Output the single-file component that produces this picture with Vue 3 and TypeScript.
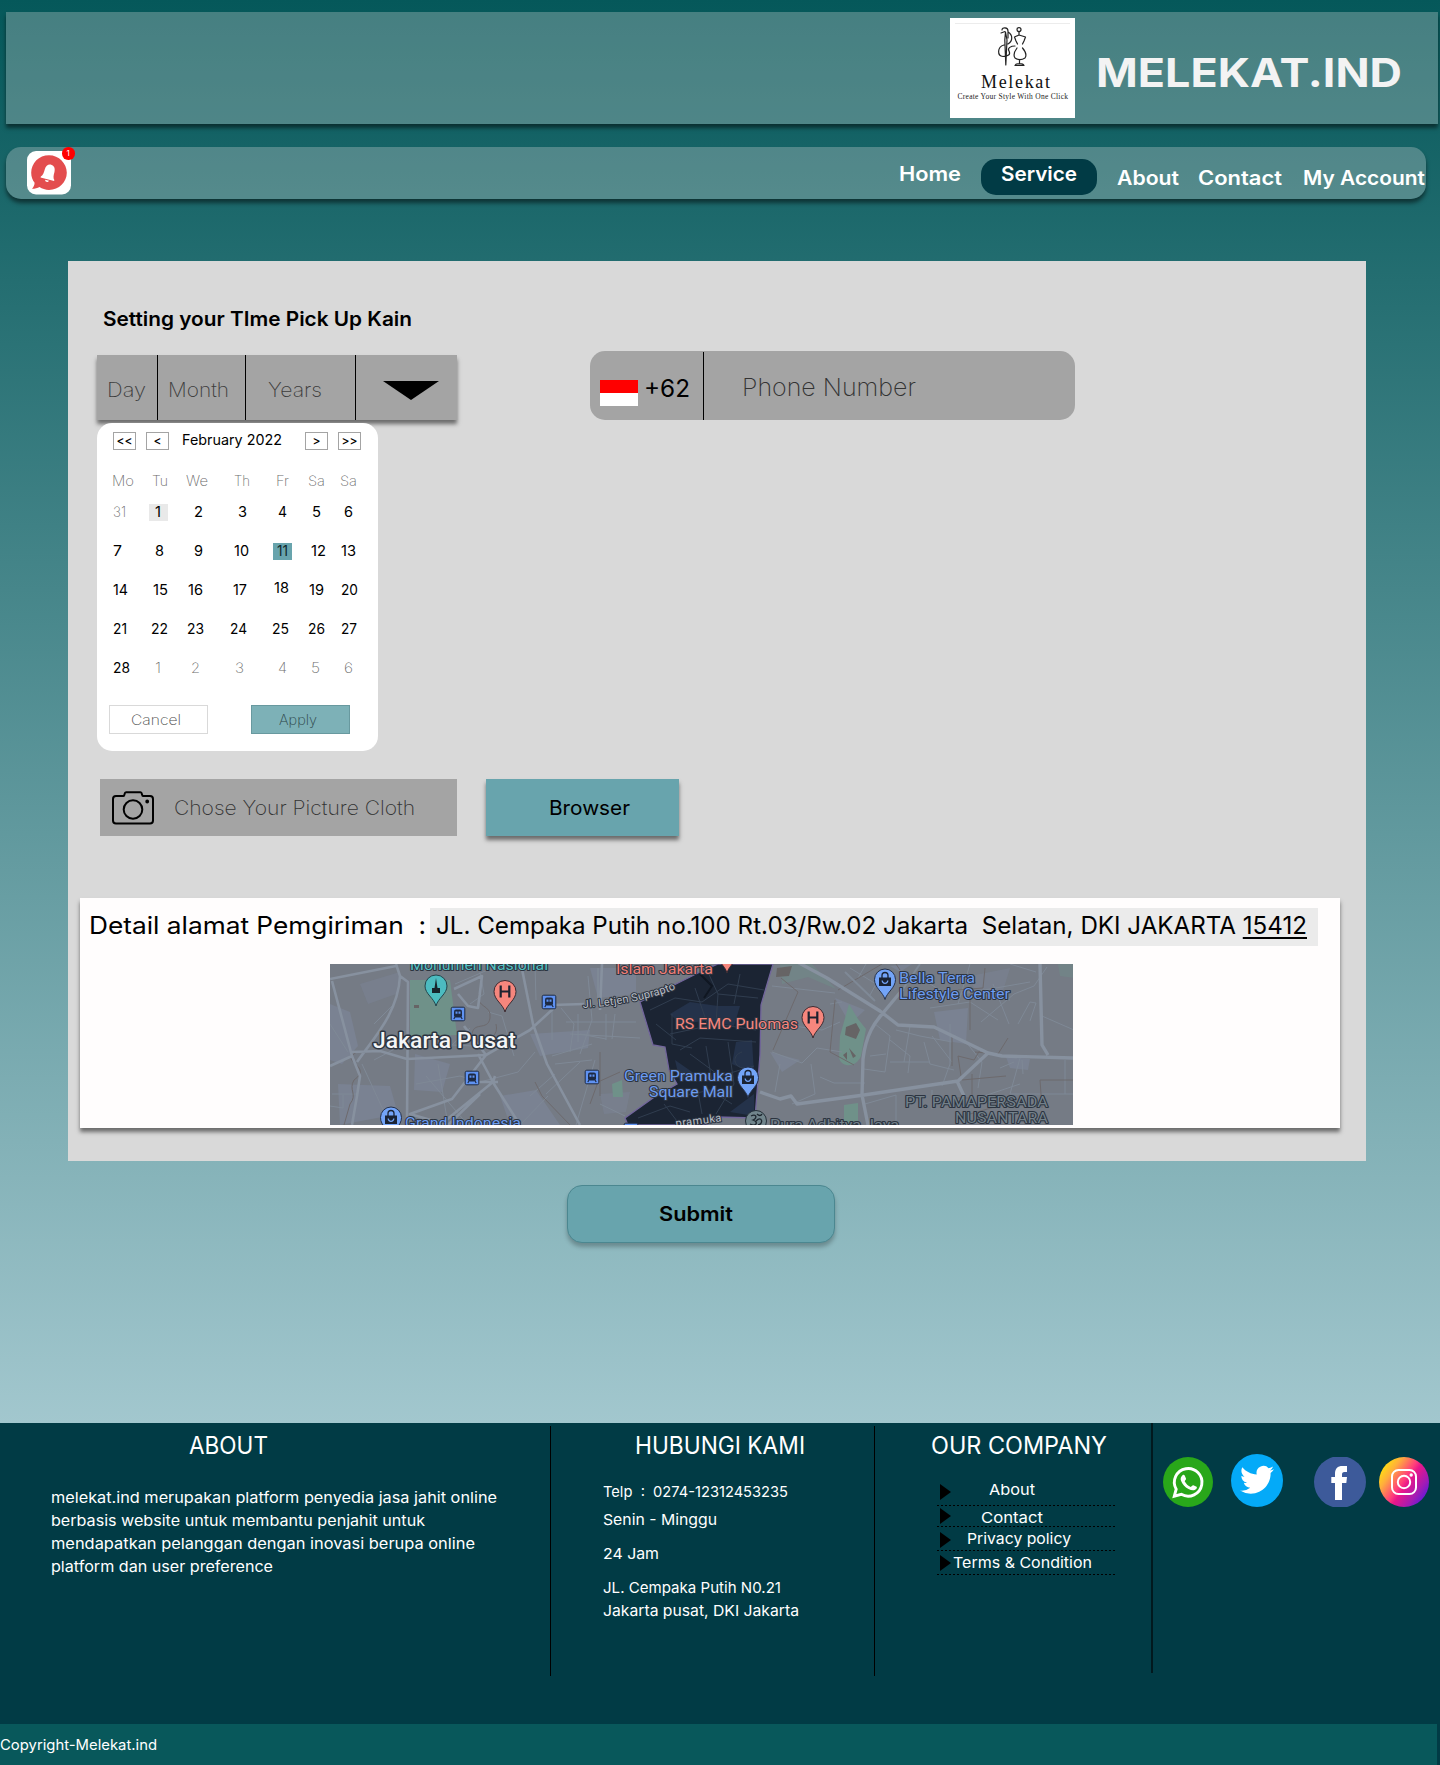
<script setup lang="ts">
import type { Directive } from 'vue'

// Stretches a label horizontally so that it fills the given width in pixels.
const vFit: Directive<HTMLElement, number> = {
  mounted(el, { value }) {
    const range = document.createRange()
    range.selectNodeContents(el)
    const natural = range.getBoundingClientRect().width
    el.style.display = 'inline-block'
    el.style.transformOrigin = '0 50%'
    el.style.transform = `scaleX(${value / natural})`
  },
}

interface NavItem { label: string; width: number; kind: string }
const nav: NavItem[] = [
  { label: 'Home', width: 62, kind: 'home' },
  { label: 'Service', width: 76, kind: 'active' },
  { label: 'About', width: 62, kind: 'about' },
  { label: 'Contact', width: 84, kind: 'contact' },
  { label: 'My Account', width: 122, kind: 'account' },
]

// Each calendar cell: label, indent inside its column, fitted width, optional style.
type Cell = [string, number, number, string?]
const weekdays: Cell[] = [
  ['Mo', 1, 22], ['Tu', 5, 16], ['We', 3, 22], ['Th', 7, 16], ['Fr', 7, 13], ['Sa', 3, 17], ['Sa', 3, 17],
]
const weeks: Cell[][] = [
  [['31', 2, 13, 'thin'], ['1', 2, 6, 'soft'], ['2', 11, 9], ['3', 11, 9], ['4', 9, 9], ['5', 7, 9], ['6', 7, 9]],
  [['7', 2, 9], ['8', 8, 9], ['9', 11, 9], ['10', 7, 15], ['11', 4, 11, 'picked'], ['12', 6, 15], ['13', 4, 15]],
  [['14', 2, 15], ['15', 6, 15], ['16', 5, 15], ['17', 6, 14], ['18', 5, 15, 'raised'], ['19', 4, 15], ['20', 4, 17]],
  [['21', 2, 14], ['22', 4, 17], ['23', 4, 17], ['24', 3, 17], ['25', 3, 17], ['26', 3, 17], ['27', 4, 16]],
  [['28', 2, 17], ['1', 8, 6, 'thin'], ['2', 8, 9, 'thin'], ['3', 8, 9, 'thin'], ['4', 9, 9, 'thin'], ['5', 6, 9, 'thin'], ['6', 7, 9, 'thin']],
]

const addressLabel = 'Detail alamat Pemgiriman  :'
const street = 'JL. Cempaka Putih no.100 Rt.03/Rw.02 Jakarta  Selatan, DKI JAKARTA '
const postcode = '15412'

const about: [string, number][] = [
  ['melekat.ind merupakan platform penyedia jasa jahit online', 446],
  ['berbasis website untuk membantu penjahit untuk', 374],
  ['mendapatkan pelanggan dengan inovasi berupa online', 424],
  ['platform dan user preference', 222],
]
const contact: [string, number, string][] = [
  ['Telp  :  0274-12312453235', 185, 'telp'],
  ['Senin - Minggu', 114, 'days'],
  ['24 Jam', 56, 'hours'],
  ['JL. Cempaka Putih N0.21', 178, 'street'],
  ['Jakarta pusat, DKI Jakarta', 196, 'city'],
]
const links: [string, number, string][] = [
  ['About', 46, 'l1'],
  ['Contact', 62, 'l2'],
  ['Privacy policy', 104, 'l3'],
  ['Terms & Condition', 139, 'l4'],
]
const stations = [[128, 50], [219, 38], [142, 114], [262, 113], [301, 166]]
const malls = [[555, 16], [418, 114], [61, 154]]
const hospitals = [[175, 28], [483, 54], [397, -11]]
</script>

<template>
  <div class="page">
    <main class="main">
      <header class="brand">
        <svg class="logo" viewBox="0 0 125 100" width="125" height="100">
          <rect width="125" height="100" fill="#fff" />
          <path d="M5 5.500H120" stroke="#ececec" />
          <g fill="none" stroke="#222" stroke-width="1.200" stroke-linecap="round" stroke-linejoin="round">
            <circle cx="69" cy="11.600" r="2" />
            <path d="M69 14V17L64.500 19L66 23L67.500 26M69 17L75.500 19L74 23L72.500 26M67 30C64 34 63 37 65 40C68 42 72 42 75 40C77 37 76 34 72.500 30M69.500 42V46M65 47.500C66 45 73 45 74 47.500Z" />
            <path d="M55.500 14L54.800 22L55.800 47L57 22ZM52 12C52 9 58 9 58 13V20M51 15L55 13.500M58 14C63 17 63 23 58 26M54 27C47 29 47 38 53 38.500C58 38 61 37 59 33C57 30 61 28 65 28" />
          </g>
          <text x="31" y="70" class="logo-name" textLength="69">Melekat</text>
          <text x="7.500" y="81" class="logo-tag" textLength="110.500">Create Your Style With One Click</text>
        </svg>
        <h1 v-fit="306" class="name">MELEKAT.IND</h1>
      </header>

      <nav class="nav">
        <div class="notice">
          <svg viewBox="0 0 44 44" width="44" height="44">
            <rect width="44" height="43.500" rx="9" fill="#fff" />
            <path d="M22 4.200C12 4.200 4.200 12 4.200 21.700C4.200 26 5.500 29 7.600 31.700C7.600 34 6.500 36 5 37.800C8 37.800 10.500 37 12.500 36C15 37.800 18.500 38.900 22 38.900C32 38.900 39.800 31 39.800 21.700S32 4.200 22 4.200Z" fill="#e34d4e" />
            <g transform="rotate(15 22 22)" fill="#fff">
              <path d="M15 27.500C17 25.500 17 23 17 19.500C17 16 19 13.500 22 13.500S27 16 27 19.500C27 23 27 25.500 29 27.500V28.500H15Z" />
              <path d="M20 29.500H24C23.500 31.800 20.500 31.800 20 29.500Z" />
            </g>
          </svg>
          <span class="badge">1</span>
        </div>
        <a v-for="n in nav" :key="n.label" class="link" :class="n.kind"><span v-fit="n.width">{{ n.label }}</span></a>
      </nav>

      <section class="panel">
        <div class="top">
          <div class="schedule">
            <h2 class="title"><span v-fit="309">Setting your TIme Pick Up Kain</span></h2>
            <div class="datebar">
              <div class="cell day"><span v-fit="39">Day</span></div>
              <div class="cell month"><span v-fit="61">Month</span></div>
              <div class="cell years"><span v-fit="54">Years</span></div>
              <svg class="caret" viewBox="0 0 56 19" width="56" height="19"><path d="M0 0H56L28 19Z" /></svg>
            </div>
            <div class="calendar">
              <div class="cal-head">
                <button class="step">&lt;&lt;</button>
                <button class="step">&lt;</button>
                <span class="when"><span v-fit="100">February 2022</span></span>
                <button class="step">&gt;</button>
                <button class="step">&gt;&gt;</button>
              </div>
              <div class="week names">
                <div v-for="(d, i) in weekdays" :key="i" :style="{ paddingLeft: d[1] + 'px' }"><span v-fit="d[2]" class="thin">{{ d[0] }}</span></div>
              </div>
              <div class="weeks">
                <div v-for="(w, r) in weeks" :key="r" class="week">
                  <div v-for="(d, i) in w" :key="i" :style="{ paddingLeft: d[1] + 'px' }"><span :class="d[3]"><span v-fit="d[2]">{{ d[0] }}</span></span></div>
                </div>
              </div>
              <div class="cal-foot">
                <button class="act"><span v-fit="50">Cancel</span></button>
                <button class="act apply"><span v-fit="38">Apply</span></button>
              </div>
            </div>
          </div>

          <div class="phone">
            <div class="flag"></div>
            <span class="code"><span v-fit="46">+62</span></span>
            <div class="number"><span v-fit="174">Phone Number</span></div>
          </div>
        </div>

        <div class="upload">
          <div class="file">
            <svg viewBox="0 0 42 34" width="42" height="34" fill="none" stroke="#000" stroke-width="2">
              <path d="M4 5H11.500C13 5 12 1.200 14 1.200H28.500C30.500 1.200 29.500 5 31 5H38C40 5 41 6 41 8V29.500C41 31.500 40 32.500 38 32.500H4C2 32.500 1 31.500 1 29.500V8C1 6 2 5 4 5Z" />
              <circle cx="21" cy="18.500" r="9.300" />
              <circle cx="35.200" cy="10.500" r="1.100" fill="#000" stroke-width="1.600" />
            </svg>
            <span v-fit="241">Chose Your Picture Cloth</span>
          </div>
          <button class="browse"><span v-fit="81">Browser</span></button>
        </div>

        <div class="address">
          <div class="line">
            <span class="label"><span v-fit="337">{{ addressLabel }}</span></span>
            <div class="field"><span v-fit="871">{{ street }}<u>{{ postcode }}</u></span></div>
          </div>

          <svg class="map" viewBox="0 0 743 161" width="743" height="161">
            <rect width="744" height="161" fill="#757b85" />
            <g fill="#7a8292">
              <path d="M0 40L20 48L28 82L12 100L0 96ZM8 120L60 122L68 150L10 161ZM85 90L120 100L112 128L84 126ZM200 70L260 66L258 84L210 92ZM170 132L206 126L230 161H180ZM260 4H306V30L268 34ZM604 48L638 44L636 80L610 76ZM676 93L700 95L698 106L680 104ZM440 88L470 96L452 108ZM505 34L535 46L520 60ZM560 2L582 0L570 8Z" />
              <path d="M30 20L70 8L66 30L38 40ZM270 130L300 128L296 148L274 150ZM640 12L680 4L672 30L648 36Z" opacity=".6" />
            </g>
            <g fill="#6f9189">
              <path d="M80 16H120L127 71L80 73Z" />
              <path d="M519 40L528 55L536 65L531 92C526 104 512 104 509 94L510 72Z" />
              <path d="M282 120L292 116L293 133H283ZM514 141L528 139V161H514Z" />
              <path d="M450 0H482L506 25L478 13L452 20Z" opacity=".45" />
              <path d="M728 0H744V14L730 12Z" opacity=".4" />
            </g>
            <path d="M516 63L526 59L530 66L526 75L515 71ZM513 91L517 88V96ZM519 84L526 92L523 94ZM84 41H89V44H84ZM447 4L462 2L459 12L446 13Z" fill="#666465" />

            <!-- side streets -->
            <g fill="none" stroke="#7f8996" stroke-width="1">
              <path d="M0 60L18 88M32 100L60 161M2 130H27M13 131V144L0 142M86 120L130 112L150 118L188 108L205 88M108 100L118 161M96 112L138 161M74 80L44 96M64 40L44 60M140 64L122 81L143 82M125 20L160 5M150 8L154 30L140 40M158 48L172 52L184 92M205 2L206 36M222 46V76M231 44L244 60L240 88M250 70L276 75M258 12L262 56L250 90M236 58H306M240 70L310 74M265 96L246 161M225 100L262 96M200 132L225 110M216 130L250 98M190 161L218 132M270 140L295 152M276 50V76M248 50V78M285 50L282 75M222 92L262 80" />
              <path d="M442 22L505 29M442 88L472 99L487 84L512 88M450 60L492 66L510 58M450 100L445 128M481 100L485 130L462 140M490 113L504 119H535M500 40L512 38M545 60L560 72L555 108L534 105M560 76L580 92L578 109M566 66L590 72L622 78M594 78L600 100L624 106M602 72L622 98M580 62L574 98M620 60V100L612 122M636 78L652 98L648 124M560 98H600M540 92L556 90M535 140L566 131V161M602 126V145M648 134L690 120M651 58L684 30L704 22L717 3M630 26L680 36M663 20L679 60M688 60L700 38L706 39L700 57M690 94L680 130H744M693 110L692 96M735 96V130M670 104L684 98M712 52L744 66M520 4L546 20L540 31M528 14L536 0M590 14L620 32L700 18M640 0L628 40M706 8L680 0M600 44L640 38L668 56" />
            </g>
            <g fill="none" stroke="#6d6a6d" stroke-width="1">
              <path d="M149 30C145 44 162 40 160 54C158 68 142 56 142 72C150 80 170 76 166 60M27 88C8 98 44 102 24 116C18 126 28 130 20 140L14 161M270 88V132M260 140L268 118L290 108M205 118L212 132L240 161" />
              <path d="M451 14L468 28L443 86M505 36L500 88L524 101M655 4L653 24L628 26M622 70V102M678 74L668 90L645 88M650 86L644 96L628 92L631 112M642 110V134H624M632 116L676 112M710 116H744M710 116L712 144M675 140L640 150M552 0L508 26M566 0L570 6M640 36V66" />
            </g>

            <!-- main roads -->
            <g fill="none" stroke="#87919f" stroke-width="3" stroke-linejoin="round">
              <path d="M0 15L66 2M66 0L70 12L78 18L77 161M2 17L22 92L0 102M22 92L30 112L27 132L22 161M70 12C68 50 42 76 27 98M22 88L50 87L77 95L156 91L200 66L224 44M156 91L122 135L80 150L118 161M148 90L164 120L190 161M118 161L150 130M124 25L152 12L148 44L138 42L128 30M134 62L156 91M191 0L203 60L217 100L250 161M222 41L254 40M272 0L270 46M165 112L163 118L110 161M142 118H168" stroke-width="2.600" />
              <path d="M456 -8L497 14L550 47L568 61L604 63L658 89L672 92L744 94M710 0L712 81L718 91M538 161L532 131L533 95C536 70 545 58 553 49L573 25M658 89L628 117L534 131L467 140L461 132L450 135L430 128M627 117L634 132" stroke-width="3.400" />
            </g>
            <g fill="none" stroke="#7f8996" stroke-width="2">
              <path d="M573 25L590 0M545 37L515 8M268 4V40" />
            </g>

            <!-- highlighted district -->
            <path d="M388 0H443L431 41L430 91L425 154L386 153L376 161H298L295 154L323 134L347 120L339 106L335 83L323 81L310 38L370 8Z" fill="#1b2433" stroke="#72659c" stroke-width="1.300" />
            <path d="M340 50L360 38L388 42L382 56L350 60ZM375 42L410 42L404 62L375 56ZM345 96L365 110L350 118ZM406 78L422 76L424 110L402 100ZM400 148L424 130V152Z" fill="#24324a" />
            <g fill="none" stroke="#303d4f" stroke-width="1">
              <path d="M320 46L345 34L372 38L398 20L434 26M342 50V80L362 84M365 24L378 62L340 70M376 4L388 30L428 34M388 30L386 60L426 66M350 86L370 74L426 78M360 90L390 112L424 102M376 82L382 118M398 78L404 120L386 150M345 134L380 126L402 140M334 140L350 161M368 128L372 150M326 60L346 76M410 10L404 40M412 88C400 92 404 106 418 104M308 154L340 142L360 148" />
              <path d="M370 10L382 22L374 34" stroke="#101722" stroke-width="2" />
            </g>

            <!-- places -->
            <g class="poi">
              <g v-for="(s, i) in stations" :key="i" :transform="`translate(${s[0]} ${s[1]})`">
                <rect x="-6.800" y="-6.800" width="13.600" height="13.600" rx="1.500" fill="#5f92f2" stroke="#1d2a44" />
                <rect x="-4" y="-4.500" width="8" height="8" rx="2" fill="#1d2a44" />
                <path d="M-2.500 -2.500H-.500V-.300H-2.500ZM.500 -2.500H2.500V-.300H.500Z" fill="#5f92f2" />
                <path d="M-3 3L-4.200 5M3 3L4.200 5" stroke="#1d2a44" stroke-width="1.200" />
              </g>
              <g v-for="(m, i) in malls" :key="i" :transform="`translate(${m[0]} ${m[1]})`">
                <path d="M0 19.500C-2 12 -10.500 8 -10.500 -.500A10.500 10.500 0 0 1 10.500 -.500C10.500 8 2 12 0 19.500Z" fill="#73a4f8" stroke="#26324b" />
                <path d="M-6 -2.500H6V6H-6Z" fill="#1a2334" />
                <path d="M-3 -2V-4.500A3 3 0 0 1 3 -4.500V-2" fill="none" stroke="#1a2334" stroke-width="1.300" />
                <path d="M-2.800 .500A2.800 2.800 0 0 0 2.800 .500" fill="none" stroke="#73a4f8" stroke-width="1.300" />
              </g>
              <g v-for="(h, i) in hospitals" :key="i" :transform="`translate(${h[0]} ${h[1]})`">
                <path d="M0 20C-2 12 -11 8 -11 -.500A11 11 0 0 1 11 -.500C11 8 2 12 0 20Z" fill="#f6867d" stroke="#3a2b32" />
                <path d="M-4.300 -6.500V5.500M4.300 -6.500V5.500M-4.300 -.500H4.300" stroke="#1c2230" stroke-width="2.200" />
              </g>
              <path d="M106 42C104 34 95 30 95 22A11 11 0 0 1 117 22C117 30 108 34 106 42Z" fill="#4cbcc0" stroke="#24454c" />
              <path d="M106 14L107.500 24H110V29H102V24H104.500Z" fill="#17242c" />
              <circle cx="426" cy="157" r="10.500" fill="#71858c" stroke="#26313a" />
              <path d="M421 152C426 149 428 154 423 156C429 158 426 163 420 160M426 157C432 151 434 160 428 161M427 150C429 152 431 152 432 150" fill="none" stroke="#1d262e" stroke-width="1.300" />
            </g>
            <g class="tags">
              <text x="80" y="6" textLength="138" lengthAdjust="spacingAndGlyphs" fill="#52bfc1">Monumen Nasional</text>
              <text x="43" y="84" textLength="143" lengthAdjust="spacingAndGlyphs" class="city-tag">Jakarta Pusat</text>
              <text x="75" y="164" textLength="116" lengthAdjust="spacingAndGlyphs" fill="#6c9cf0">Grand Indonesia</text>
              <text x="286" y="10" textLength="97" lengthAdjust="spacingAndGlyphs" fill="#ee7f76">Islam Jakarta</text>
              <text x="345" y="65" textLength="123" lengthAdjust="spacingAndGlyphs" fill="#f6867d">RS EMC Pulomas</text>
              <text x="294" y="117" textLength="109" lengthAdjust="spacingAndGlyphs" fill="#6c9cf0">Green Pramuka</text>
              <text x="319" y="133" textLength="84" lengthAdjust="spacingAndGlyphs" fill="#6c9cf0">Square Mall</text>
              <text x="569" y="18.500" textLength="76" lengthAdjust="spacingAndGlyphs" fill="#6c9cf0">Bella Terra</text>
              <text x="569" y="34.500" textLength="111" lengthAdjust="spacingAndGlyphs" fill="#6c9cf0">Lifestyle Center</text>
              <text x="575" y="143" textLength="143" lengthAdjust="spacingAndGlyphs" class="dim">PT. PAMAPERSADA</text>
              <text x="625" y="159" textLength="93" lengthAdjust="spacingAndGlyphs" class="dim">NUSANTARA</text>
              <text x="440" y="166" textLength="129" lengthAdjust="spacingAndGlyphs" class="dim">Pura Adhitya Jaya</text>
              <path id="street" d="M253 44Q310 40 348 24" fill="none" stroke="none" />
              <text class="street-tag"><textPath href="#street" textLength="95">Jl. Letjen Suprapto</textPath></text>
              <text class="street-tag" transform="translate(346 163) rotate(-7)" textLength="46">pramuka</text>
            </g>
          </svg>
        </div>
      </section>

      <button class="submit"><span v-fit="74">Submit</span></button>
    </main>

    <footer class="footer">
      <section class="col c1">
        <h3><span v-fit="79">ABOUT</span></h3>
        <p class="about-text"><span v-for="a in about" :key="a[0]" v-fit="a[1]">{{ a[0] }}</span></p>
      </section>
      <div class="rule"></div>
      <section class="col c2">
        <h3><span v-fit="170">HUBUNGI KAMI</span></h3>
        <p v-for="c in contact" :key="c[0]" :class="c[2]"><span v-fit="c[1]">{{ c[0] }}</span></p>
      </section>
      <div class="rule"></div>
      <section class="col c3">
        <h3><span v-fit="176">OUR COMPANY</span></h3>
        <ul>
          <li v-for="l in links" :key="l[0]" :class="l[2]">
            <svg viewBox="0 0 11 16" width="11" height="16"><path d="M0 0L11 8L0 16Z" /></svg>
            <span v-fit="l[1]">{{ l[0] }}</span>
          </li>
        </ul>
      </section>
      <div class="rule last"></div>
      <div class="social">
        <svg class="wa" viewBox="0 0 50 50" width="50" height="50">
          <circle cx="25" cy="25" r="25" fill="#29a71a" />
          <path d="M11.300 39.200L13.200 32.200A13.800 13.800 0 1 1 18.300 37.300Z" fill="none" stroke="#fff" stroke-width="2.900" />
          <path d="M19.500 18.200C20.300 17.500 21.300 17.700 21.700 18.600L23 21.500C23.300 22.400 22 23.500 21.700 24.200C23 26.900 25.100 28.700 27.800 29.900C28.500 29.500 29.500 27.900 30.400 28.200L33.600 29.700C34.200 30 33.800 31.400 33.200 32C31.400 33.700 28.600 33.600 25.500 32C21.800 30.200 19.400 27.300 18 23.800C17.200 21.600 17.900 19.600 19.500 18.200Z" fill="#fff" />
        </svg>
        <svg class="tw" viewBox="0 0 52 53" width="52" height="53">
          <ellipse cx="26" cy="26.500" rx="26" ry="26.500" fill="#04aaf8" />
          <path transform="translate(9 8.800) scale(1.420)" fill="#fff" d="M23.950 4.570a10 10 0 0 1-2.820.770 4.960 4.960 0 0 0 2.160-2.720c-.950.550-2 .960-3.130 1.190a4.920 4.920 0 0 0-8.380 4.480C7.690 8.090 4.070 6.130 1.640 3.160a4.820 4.820 0 0 0-.670 2.480c0 1.710.870 3.210 2.190 4.100a4.900 4.900 0 0 1-2.230-.620v.060a4.920 4.920 0 0 0 3.950 4.830 5 5 0 0 1-2.210.080 4.940 4.940 0 0 0 4.600 3.420A9.870 9.870 0 0 1 0 19.540a13.990 13.990 0 0 0 7.560 2.210c9.050 0 14-7.500 14-13.980 0-.210 0-.420-.020-.630a9.940 9.940 0 0 0 2.410-2.570z" />
        </svg>
        <svg class="fb" viewBox="0 0 52 50" width="52" height="50">
          <circle cx="26" cy="25" r="26" fill="#3d5a9a" />
          <path d="M21 43V26H17.300V20H21V17C21 11.500 23.500 9 28.500 9H33V15H30.500C28.500 15 28 16 28 17.700V20H33L32.300 26H28V43Z" fill="#fff" />
        </svg>
        <svg class="ig" viewBox="0 0 50 50" width="50" height="50">
          <defs>
            <linearGradient id="ig" x1="0" y1=".150" x2="1" y2=".850">
              <stop offset="0" stop-color="#fff200" /><stop offset=".240" stop-color="#ffae3c" /><stop offset=".480" stop-color="#ff3b7c" />
              <stop offset=".560" stop-color="#e8178a" /><stop offset=".780" stop-color="#a41bb4" /><stop offset="1" stop-color="#4a18e8" />
            </linearGradient>
          </defs>
          <circle cx="25" cy="25" r="25" fill="url(#ig)" />
          <g fill="none" stroke="#fff" stroke-width="2">
            <rect x="13" y="13" width="24" height="24" rx="6.500" />
            <circle cx="25" cy="25" r="6.200" />
          </g>
          <circle cx="32.200" cy="18" r="1.700" fill="#fff" />
        </svg>
      </div>
    </footer>
    <div class="copyright"><span v-fit="157">Copyright-Melekat.ind</span></div>
  </div>
</template>

<style>
body { margin: 0; background: #013b45; }
</style>

<style scoped>
.page { width: 1440px; height: 1765px; overflow: hidden; font-family: Inter, 'Liberation Sans', sans-serif; color: #000; background: #013b45; }
.page span, .page h1 { white-space: pre; }
h1, h2, h3, p, ul { margin: 0; padding: 0; font-weight: 400; }
button { margin: 0; padding: 0; border: 0; font: inherit; color: inherit; text-align: left; box-sizing: border-box; }
svg { display: block; flex: none; }

.main { height: 1423px; overflow: hidden; background: linear-gradient(#05585a, #a2c7ce); }

.brand { display: flex; width: 1432px; height: 112px; margin: 12px 0 0 6px; background: rgba(217, 217, 217, .3); box-shadow: 0 4px 4px rgba(0, 0, 0, .5); }
.logo { margin: 6px 0 0 944px; }
.logo-name { font: 18px 'Liberation Serif', serif; fill: #111; }
.logo-tag { font: 7.500px 'Liberation Serif', serif; fill: #222; }
.name { margin: 31px 0 0 21px; height: 60px; font-size: 40px; line-height: 60px; font-weight: 700; color: #f3f3f3; }

.nav { display: flex; align-items: flex-start; width: 1420px; height: 52px; margin: 23px 0 0 6px; border-radius: 15px; background: rgba(217, 217, 217, .3); box-shadow: 0 4px 4px rgba(0, 0, 0, .5); }
.notice { position: relative; margin: 4px auto 0 21px; }
.badge { position: absolute; left: 35px; top: -4px; width: 12.500px; height: 12.500px; border-radius: 50%; background: #f00; color: #fff; font-size: 8px; line-height: 12.500px; text-align: center; }
.link { flex: none; box-sizing: border-box; color: #fff; font-size: 20px; font-weight: 600; line-height: 30px; }
.home { width: 82px; margin-top: 12px; }
.active { width: 116px; height: 36px; margin-top: 12px; padding-left: 20px; border-radius: 15px; background: #013b45; }
.about { width: 63px; margin: 16px 18px 0 20px; }
.contact { width: 84px; margin: 16px 21px 0 0; }
.account { width: 123px; margin-top: 16px; }

.panel { width: 1298px; height: 900px; margin: 62px 0 0 68px; background: #d9d9d9; overflow: hidden; }
.top { display: flex; height: 490px; }
.schedule { width: 360px; margin-left: 29px; }
.title { margin: 43px 0 0 5.500px; font-size: 20px; line-height: 30px; font-weight: 600; height: 30px; }
.datebar { display: flex; height: 65px; margin-top: 21px; background: #a4a4a4; box-shadow: 0 4px 4px rgba(0, 0, 0, .5); }
.cell { box-sizing: border-box; padding-top: 20px; border-right: 1px solid #000; font-size: 20px; line-height: 30px; font-weight: 200; color: #3c3c3c; }
.day { width: 61px; padding-left: 10px; }
.month { width: 88px; padding-left: 10px; }
.years { width: 110px; padding-left: 22px; }
.caret { margin: 26px 0 0 27px; }

.calendar { position: relative; width: 281px; height: 328px; margin-top: 3px; border-radius: 15px; background: #fff; font-size: 14px; overflow: hidden; }
.cal-head { display: flex; margin: 9px 0 0 16px; height: 18px; }
.step { flex: none; width: 23px; height: 18px; border: 1px solid #a4a4a4; background: #fff; font-size: 12px; line-height: 14px; font-weight: 500; text-align: center; margin-right: 10px; }
.when { box-sizing: border-box; flex: none; width: 114px; padding-left: 2.500px; line-height: 16px; }
.when + .step { margin-left: 12px; }
.week { display: grid; grid-template-columns: 36px 36px 44px 42px 36px 32px 30px; height: 20px; line-height: 20px; margin-left: 14px; }
.names { margin-top: 21px; }
.weeks { display: grid; gap: 19px; margin-top: 11px; }
.thin { font-weight: 200; color: #6d6d6d; }
.soft, .picked { display: block; box-sizing: border-box; width: 19px; height: 17px; margin-top: 2px; line-height: 16px; padding-left: 6px; background: #e9e9e9; }
.picked { padding-left: 4px; background: #68a4ad; color: #10282c; }
.raised { display: block; margin-top: -2px; }
.cal-foot { display: flex; gap: 43px; margin: 27px 0 0 12px; }
.act { width: 99px; height: 29px; border: 1px solid #d9d9d9; background: #fff; padding-left: 20.500px; font-size: 14px; line-height: 26px; font-weight: 200; color: #4c4c4c; }
.apply { padding-left: 27px; background: #7db1b7; border-color: #68999f; color: #2c4447; }

.phone { display: flex; width: 485px; height: 69px; margin: 90px 0 0 133px; border-radius: 15px; background: #a4a4a4; }
.flag { width: 38px; height: 26px; margin: 29px 6px 0 10px; background: linear-gradient(#f00 50%, #fff 50%); }
.code { width: 59px; margin-top: 20px; font-size: 24px; line-height: 36px; }
.number { height: 50px; margin-top: 1px; padding: 18px 0 0 38px; border-left: 1px solid #000; font-size: 24px; line-height: 36px; font-weight: 200; color: #333; }

.upload { display: flex; gap: 29px; height: 57px; margin: 28px 0 0 32px; font-size: 20px; line-height: 59px; }
.file { display: flex; width: 357px; background: #a4a4a4; font-weight: 200; color: #333; }
.file svg { margin: 12px 20px 0 12px; }
.browse { width: 193px; padding-left: 63px; background: #68a4ad; box-shadow: 0 4px 4px rgba(0, 0, 0, .5); }

.address { width: 1260px; height: 230px; margin: 62px 0 0 12px; background: #fffdfd; box-shadow: 0 4px 4px rgba(0, 0, 0, .5); overflow: hidden; }
.line { display: flex; height: 48px; font-size: 24px; }
.label { box-sizing: border-box; flex: none; width: 350px; padding: 10px 0 0 9px; line-height: 36px; }
.field { box-sizing: border-box; width: 888px; height: 38px; margin-top: 10px; padding-left: 6px; background: #ebebeb; line-height: 36px; }
.field u { text-decoration-thickness: 1.500px; text-underline-offset: 3px; }
.map { margin: 18px 0 0 250px; }
.tags text { font-family: Roboto, sans-serif; font-size: 14.500px; paint-order: stroke; stroke: #2c3440; stroke-width: 2px; stroke-linejoin: round; }
.tags .city-tag { font-size: 22px; font-weight: 500; fill: #f4f5f6; stroke-width: 3px; }
.tags .dim { fill: #72808a; }
.tags .street-tag { font-size: 11px; fill: #b9bec6; }

.submit { display: block; width: 268px; height: 58px; margin: 24px 0 0 567px; padding-left: 91px; border: 1px solid #4b8790; border-radius: 15px; background: #68a4ad; box-shadow: 0 4px 4px rgba(0, 0, 0, .25); font-size: 20px; font-weight: 600; line-height: 56px; }

.footer { display: flex; height: 301px; background: #013b45; color: #fff; font-size: 15px; line-height: 23px; }
.col { box-sizing: border-box; flex: none; padding-top: 5px; }
.c1 { width: 550px; padding-left: 51px; }
.c2 { width: 323px; padding-left: 51.500px; }
.c3 { width: 276px; padding-left: 62px; }
h3 { height: 36px; font-size: 24px; line-height: 36px; }
.c1 h3 { margin-left: 138px; }
.c2 h3 { margin-left: 32px; }
.c3 h3 { margin-left: -6px; }
.rule { flex: none; width: 1px; height: 250px; margin-top: 3px; background: #000; }
.last { width: 2px; margin-top: 0; background: #01191e; }
.about-text { display: flex; flex-direction: column; align-items: flex-start; margin-top: 22px; }
.telp { margin-top: 16px; }
.days { margin-top: 5px; }
.hours { margin-top: 11px; }
.street { margin-top: 11px; }
ul { width: 180px; margin-top: 15px; list-style: none; line-height: 20px; }
li { display: flex; align-items: flex-start; box-sizing: border-box; padding-left: 3px; background: repeating-linear-gradient(90deg, #000 0 2px, transparent 2px 4px) left bottom / 100% 1px no-repeat; }
.l1 { height: 27px; }
.l1 svg { margin: 5px 38px 0 0; }
.l1 span { margin-top: 1px; }
.l2 { height: 21px; }
.l2 svg { margin: 2px 29.500px 0 0; }
.l2 span { margin-top: 2px; }
.l3 { height: 24px; }
.l3 svg { margin: 5px 15.500px 0 0; }
.l3 span { margin-top: 2px; }
.l4 { height: 24px; }
.l4 svg { margin: 4px 1.500px 0 0; }
.l4 span { margin-top: 2px; }
.social { display: flex; align-items: flex-start; }
.wa { margin: 34px 0 0 10px; }
.tw { margin: 31px 0 0 18px; }
.fb { margin: 34px 0 0 31px; }
.ig { margin: 34px 0 0 13px; }
.copyright { width: 1437px; height: 41px; background: #08585b; color: #fff; font-size: 14.500px; line-height: 41px; }
</style>
